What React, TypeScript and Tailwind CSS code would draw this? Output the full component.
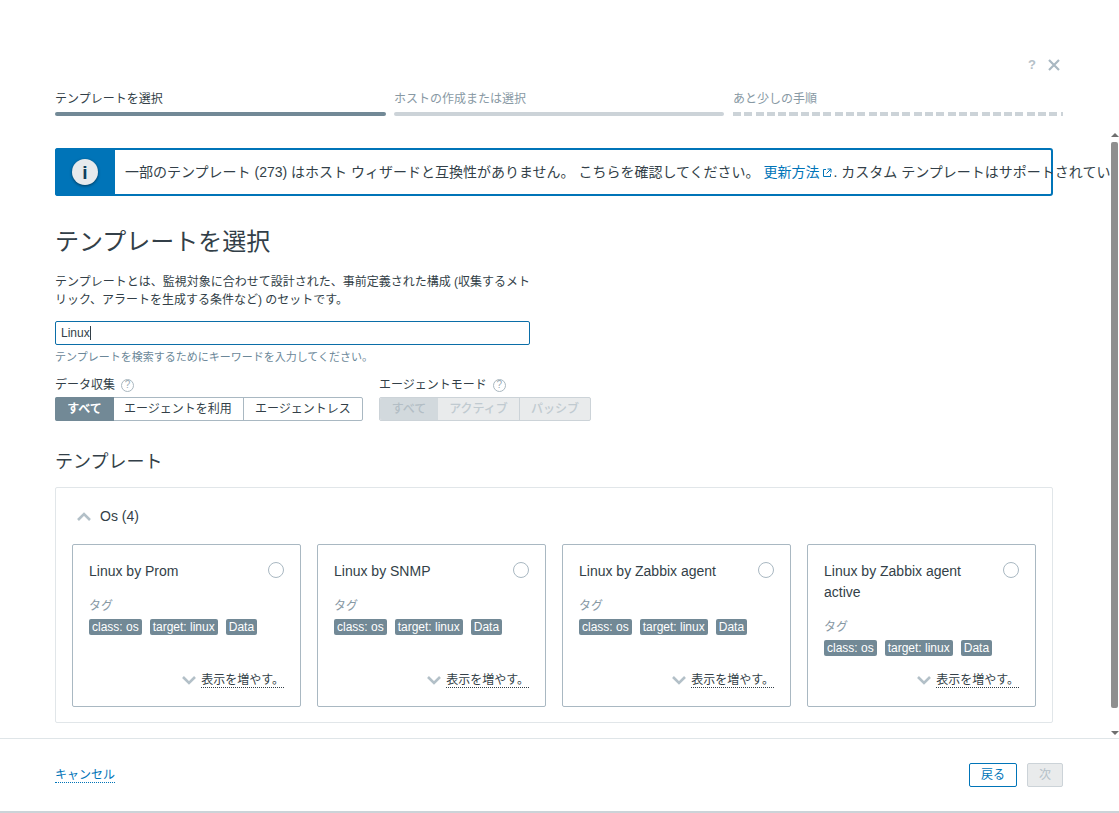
const font = "font-['Liberation_Sans','Noto_Sans_CJK_JP',sans-serif]"

// テンプレート カード
const templates = [
  { id: 1, name: "Linux by Prom" },
  { id: 2, name: "Linux by SNMP" },
  { id: 3, name: "Linux by Zabbix agent" },
  { id: 4, name: "Linux by Zabbix agent active" },
]

const tags = ["class: os", "target: linux", "Data"]

function HelpIcon() {
  return (
    <span className="ml-[6px] flex h-[13px] w-[13px] items-center justify-center rounded-full border border-[#aab8c0] text-[10px] leading-none text-[#9aabb4]">
      ?
    </span>
  )
}

function Chevron({ up = false }: { up?: boolean }) {
  return (
    <svg viewBox="0 0 14 9" className="h-[9px] w-[14px] fill-none stroke-[#b3c0c8]" strokeWidth={2.6}>
      <path d={up ? "M1 8 7 2l6 6" : "M1 1l6 6 6-6"} />
    </svg>
  )
}

function TemplateCard({ name }: { name: string }) {
  return (
    <div className="flex h-[163px] w-[229px] flex-col rounded-[2px] border border-[#a9b8c2] px-4 pt-4 pb-[18px]">
      <div className="flex items-start justify-between">
        <div className="w-[170px] text-[14px] leading-[21px] text-[#333f48]">{name}</div>
        <span className="mt-px h-4 w-4 shrink-0 rounded-full border border-[#a9b8c2]" />
      </div>
      <div className="mt-[16px] text-[12px] leading-[16px] text-[#8899a4]">タグ</div>
      <div className="mt-[5px] flex gap-[8px]">
        {tags.map((tag) => (
          <span key={tag} className="rounded-[2px] bg-[#728996] px-[3px] text-[12px] leading-[16px] text-white">
            {tag}
          </span>
        ))}
      </div>
      <div className="mt-auto flex items-center justify-end">
        <span className="mr-[5px]"><Chevron /></span>
        <span className="border-b border-dotted border-[#333f48] text-[12px] leading-[14px] text-[#333f48]">表示を増やす。</span>
      </div>
    </div>
  )
}

export default function App() {
  return (
    <div className={`${font} flex h-[813px] w-[1119px] flex-col overflow-hidden border-b-2 border-[#ccd3d8] bg-white`}>
      {/* ヘッダー */}
      <div className="flex h-[90px] items-end justify-end pr-[59px] pb-[18px]">
        <span className="mr-[12px] -mb-px text-[13px] font-bold leading-4 text-[#b5c1c8]">?</span>
        <svg viewBox="0 0 12 12" className="mb-[1px] h-[12px] w-[12px] fill-none stroke-[#a9b8c2]" strokeWidth={2.2}>
          <path d="M1 1l10 10M11 1 1 11" />
        </svg>
      </div>

      {/* ステップ */}
      <div className="flex h-[40px] gap-[8px] pl-[55px] pr-[56px] text-[12px] leading-[18px]">
        <div className="w-[331px]">
          <div className="text-[#333f48]">テンプレートを選択</div>
          <div className="mt-[4px] h-1 rounded-full bg-[#728996]" />
        </div>
        <div className="w-[330px]">
          <div className="text-[#8899a4]">ホストの作成または選択</div>
          <div className="mt-[4px] h-1 rounded-full bg-[#ccd3d8]" />
        </div>
        <div className="ml-px flex-1">
          <div className="text-[#8899a4]">あと少しの手順</div>
          <div className="mt-[4px] h-1 bg-[repeating-linear-gradient(90deg,#ccd3d8_0,#ccd3d8_8px,transparent_8px,transparent_11.300px)]" />
        </div>
      </div>

      <div className="flex min-h-0 flex-1 border-b border-[#dfe5e8]">
        {/* スクロール領域 */}
        <div className="min-w-0 flex-1 overflow-hidden pl-[55px] pr-[57px] pt-[18px]">
          <div className="relative flex h-[48px] w-[998px] items-center rounded-[3px] border-2 border-[#0074b8]">
            <div className="-ml-[2px] flex h-[48px] w-[60px] shrink-0 items-center justify-center rounded-l-[3px] bg-[#0074b8]">
              <span className="flex h-[26px] w-[26px] items-center justify-center rounded-full bg-[#e6eaed] text-[19px] font-bold leading-none text-[#0d3f5e] shadow-[0_1px_3px_rgba(0,0,0,0.5)]">
                i
              </span>
            </div>
            <div className="ml-[10px] whitespace-nowrap text-[14px] leading-[20px] text-[#333f48]">
              一部のテンプレート (273) はホスト ウィザードと互換性がありません。 こちらを確認してください。
              <span className="ml-[4px] text-[#0074b8]">更新方法</span>
              <svg viewBox="0 0 10 10" className="mx-[2px] inline h-[10px] w-[10px] fill-none stroke-[#0074b8]">
                <path d="M4 1.5H1.5v7h7V6M5.5 1h3.5v3.500M9 1 4.500 5.500" />
              </svg>
              . カスタム テンプレートはサポートされています
            </div>
          </div>

          <h1 className="mt-[29px] text-[24px] leading-[34px] text-[#333f48]">テンプレートを選択</h1>
          <p className="mt-[15px] w-[480px] text-[12px] leading-[17.500px] text-[#333f48]">
            テンプレートとは、監視対象に合わせて設計された、事前定義された構成 (収集するメトリック、アラートを生成する条件など) のセットです。
          </p>

          <div className="mt-[12px] flex h-[24px] w-[475px] items-center rounded-[2px] border border-[#0b6ea8] px-[5px] text-[12px] leading-none text-[#333f48]">
            Linux<span className="h-[14px] w-px bg-[#333f48]" />
          </div>
          <div className="mt-[4px] text-[11px] leading-[16px] text-[#6b8798]">テンプレートを検索するためにキーワードを入力してください。</div>

          <div className="mt-[12px] flex gap-[16px]">
            <div className="w-[308px]">
              <div className="flex h-[16px] items-center text-[12px] text-[#333f48]">データ収集<HelpIcon /></div>
              <div className="mt-[4px] flex h-[24px] rounded-[2px] border border-[#a9b8c2] text-[12px] text-[#333f48]">
                <div className="-m-px flex w-[59px] items-center justify-center rounded-l-[2px] bg-[#728996] font-bold text-white">すべて</div>
                <div className="flex flex-1 items-center justify-center border-r border-[#a9b8c2]">エージェントを利用</div>
                <div className="flex w-[118px] items-center justify-center">エージェントレス</div>
              </div>
            </div>
            <div className="w-[212px]">
              <div className="flex h-[16px] items-center text-[12px] text-[#333f48]">エージェントモード<HelpIcon /></div>
              <div className="mt-[4px] flex h-[24px] rounded-[2px] border border-[#ccd3d8] bg-[#e9ebec] text-[12px] font-medium text-[#c0cad0]">
                <div className="flex w-[58px] items-center justify-center rounded-l-[2px] bg-[#d2d9dd] text-[#b3bec5]">すべて</div>
                <div className="flex w-[82px] items-center justify-center border-r border-[#ccd3d8]">アクティブ</div>
                <div className="flex flex-1 items-center justify-center">パッシブ</div>
              </div>
            </div>
          </div>

          <h2 className="mt-[27px] text-[18px] leading-[28px] text-[#333f48]">テンプレート</h2>

          <div className="mt-[11px] h-[236px] w-[998px] rounded-[2px] border border-[#e1e6e9] px-4 pt-[18px]">
            <div className="flex h-[20px] items-center text-[14px] text-[#333f48]">
              <span className="ml-[5px] mr-[9px]"><Chevron up /></span>
              Os (4)
            </div>
            <div className="mt-[18px] flex gap-[16px]">
              {templates.map((template) => (
                <TemplateCard key={template.id} name={template.name} />
              ))}
            </div>
          </div>
        </div>

        {/* スクロールバー */}
        <div className="flex w-[9px] shrink-0 flex-col items-center pt-[3px] pb-[3px]">
          <span className="h-0 w-0 border-x-[4px] border-b-[4px] border-x-transparent border-b-[#6f6f6f]" />
          <div className="mt-[5px] h-[566px] w-[7px] rounded-[2px] bg-[#8f8f8f]" />
          <span className="mt-auto h-0 w-0 border-x-[4px] border-t-[4px] border-x-transparent border-t-[#6f6f6f]" />
        </div>
      </div>

      {/* フッター */}
      <div className="flex h-[72px] items-center justify-between pl-[55px] pr-[56px] text-[12px]">
        <span className="mt-[1px] border-b border-dotted border-[#0074b8] leading-[14px] text-[#0074b8]">キャンセル</span>
        <div className="flex gap-[10px]">
          <button className="h-[24px] w-[48px] rounded-[2px] border border-[#0074b8] text-[#0074b8]">戻る</button>
          <button className="h-[24px] w-[36px] rounded-[2px] border border-[#ccd3d8] bg-[#e9ebec] text-[#b5c1c8]">次</button>
        </div>
      </div>
    </div>
  )
}
